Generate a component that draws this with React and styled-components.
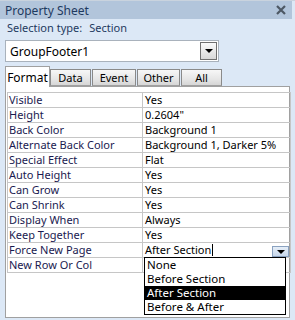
import React from "react"
import styled, { createGlobalStyle } from "styled-components"

const GlobalStyle = createGlobalStyle`
  body {
    margin: 0;
    font-family: "Noto Sans", "DejaVu Sans", sans-serif;
    background: #dce8f6;
  }
`

const rows = [
  ["Visible", "Yes"],
  ["Height", "0.2604\""],
  ["Back Color", "Background 1"],
  ["Alternate Back Color", "Background 1, Darker 5%"],
  ["Special Effect", "Flat"],
  ["Auto Height", "Yes"],
  ["Can Grow", "Yes"],
  ["Can Shrink", "Yes"],
  ["Display When", "Always"],
  ["Keep Together", "Yes"],
  ["Force New Page", "After Section", true],
  ["New Row Or Col", ""],
]

const options = ["None", "Before Section", "After Section", "Before & After"]
const tabs = ["Format", "Data", "Event", "Other", "All"]
const tabWidths = [45, 41, 44, 43, 41]

export default function App() {
  return (
    <Sheet>
      <GlobalStyle />
      <TitleBar>
        <Title>Property Sheet</Title>
        <CloseIcon width="10" height="10" viewBox="0 0 10 10">
          <path d="M1 1L9 9M9 1L1 9" stroke="#4d5864" strokeWidth="2.2" />
        </CloseIcon>
      </TitleBar>
      <SelectionRow>
        <span>Selection type:</span>
        <span>Section</span>
      </SelectionRow>
      <Combo>
        <ComboText>GroupFooter1</ComboText>
        <ComboButton>
          <Arrow />
        </ComboButton>
      </Combo>
      <Tabs>
        {tabs.map((t, i) => (
          <Tab key={t} $active={i === 0} $w={tabWidths[i]}>
            {t}
          </Tab>
        ))}
      </Tabs>
      <Panel>
        <Grid>
          {rows.map(([name, value, open]) => (
            <Row key={name}>
              <NameCell>{name}</NameCell>
              <ValueCell>
                {value}
                {open && (
                  <>
                    <Caret />
                    <CellButton>
                      <Arrow />
                    </CellButton>
                    <List>
                      {options.map(o => (
                        <Option key={o} $selected={o === "After Section"}>
                          {o}
                        </Option>
                      ))}
                    </List>
                  </>
                )}
              </ValueCell>
            </Row>
          ))}
        </Grid>
      </Panel>
    </Sheet>
  )
}

const Sheet = styled.div`
  width: 295px;
  height: 320px;
  background: #dce8f6;
  border-top: 1px solid #c9d3de;
  box-sizing: border-box;
  overflow: hidden;
`

const TitleBar = styled.div`
  width: 292px;
  height: 18px;
  background: #b2c5db;
  display: flex;
  align-items: center;
  justify-content: space-between;
  padding: 0 6px 0 5px;
  box-sizing: border-box;
`

const Title = styled.span`
  font-size: 12px;
  color: #1e3a5f;
`

const CloseIcon = styled.svg`
  display: block;
`

const SelectionRow = styled.div`
  display: flex;
  gap: 7px;
  height: 17px;
  align-items: center;
  padding-left: 7px;
  font-size: 11px;
  color: #1e3a5f;
`

const Combo = styled.div`
  margin: 4px 0 0 5px;
  width: 214px;
  height: 22px;
  box-sizing: border-box;
  border: 1px solid #a9b2bc;
  background: #fff;
  display: flex;
  align-items: center;
  justify-content: space-between;
  padding: 0 1px 0 4px;
`

const ComboText = styled.span`
  font-size: 12px;
  color: #000;
`

const ComboButton = styled.div`
  width: 17px;
  height: 18px;
  box-sizing: border-box;
  border: 1px solid #707070;
  background: linear-gradient(#fafafa, #d8d8d8);
  display: flex;
  align-items: center;
  justify-content: center;
`

const Arrow = styled.div`
  width: 0;
  height: 0;
  border-left: 4px solid transparent;
  border-right: 4px solid transparent;
  border-top: 4px solid #000;
`

const Tabs = styled.div`
  display: flex;
  align-items: flex-end;
  margin-top: 4px;
  padding-left: 5px;
  height: 20px;
  position: relative;
  z-index: 1;
`

const Tab = styled.div`
  width: ${p => p.$w}px;
  height: ${p => (p.$active ? 21 : 17)}px;
  box-sizing: border-box;
  border: 1px solid ${p => (p.$active ? "#a0a0a0" : "#8a8a8a")};
  border-bottom: ${p => (p.$active ? "none" : "1px solid #a0a0a0")};
  background: ${p =>
    p.$active ? "#fff" : "linear-gradient(#f7f7f7, #e6e6e6 60%, #d6d6d6)"};
  font-size: ${p => (p.$active ? 12 : 11)}px;
  color: #000;
  display: flex;
  justify-content: center;
  align-items: ${p => (p.$active ? "flex-start" : "center")};
  padding-top: ${p => (p.$active ? 2 : 0)}px;
  margin-right: ${p => (p.$active ? 0 : 1)}px;
  margin-bottom: ${p => (p.$active ? -1 : 0)}px;
`

const Panel = styled.div`
  margin-left: 5px;
  width: 285px;
  height: 232px;
  box-sizing: border-box;
  background: #fff;
  border: 1px solid #a0a0a0;
  padding: 5px 0 0 1px;
`

const Grid = styled.div`
  width: 282px;
  border-top: 1px solid #c6c6c6;
  border-left: 1px solid #c6c6c6;
  border-right: 1px solid #c6c6c6;
`

const Row = styled.div`
  display: grid;
  grid-template-columns: 135px 1fr;
  height: 15px;
  box-sizing: border-box;
  border-bottom: 1px solid #c6c6c6;
  font-size: 11px;
  line-height: 14px;
`

const NameCell = styled.div`
  padding-left: 1px;
  color: #1a1a50;
  border-right: 1px solid #c6c6c6;
  white-space: nowrap;
`

const ValueCell = styled.div`
  position: relative;
  padding-left: 2px;
  color: #000;
  white-space: nowrap;
  display: flex;
  align-items: center;
`

const Caret = styled.span`
  width: 1px;
  height: 12px;
  background: #000;
  margin-left: 1px;
`

const CellButton = styled.div`
  position: absolute;
  right: 1px;
  top: 3px;
  width: 17px;
  height: 11px;
  box-sizing: border-box;
  border: 1px solid #8aa2c0;
  background: linear-gradient(#e6eef8, #c7d7ea);
  display: flex;
  align-items: center;
  justify-content: center;
`

const List = styled.div`
  position: absolute;
  left: 1px;
  top: 14px;
  width: 142px;
  box-sizing: border-box;
  border: 1px solid #000;
  background: #fff;
  z-index: 2;
`

const Option = styled.div`
  height: 14px;
  line-height: 14px;
  font-size: 11.5px;
  padding-left: 2px;
  overflow: hidden;
  background: ${p => (p.$selected ? "#000" : "#fff")};
  color: ${p => (p.$selected ? "#fff" : "#000")};
`
